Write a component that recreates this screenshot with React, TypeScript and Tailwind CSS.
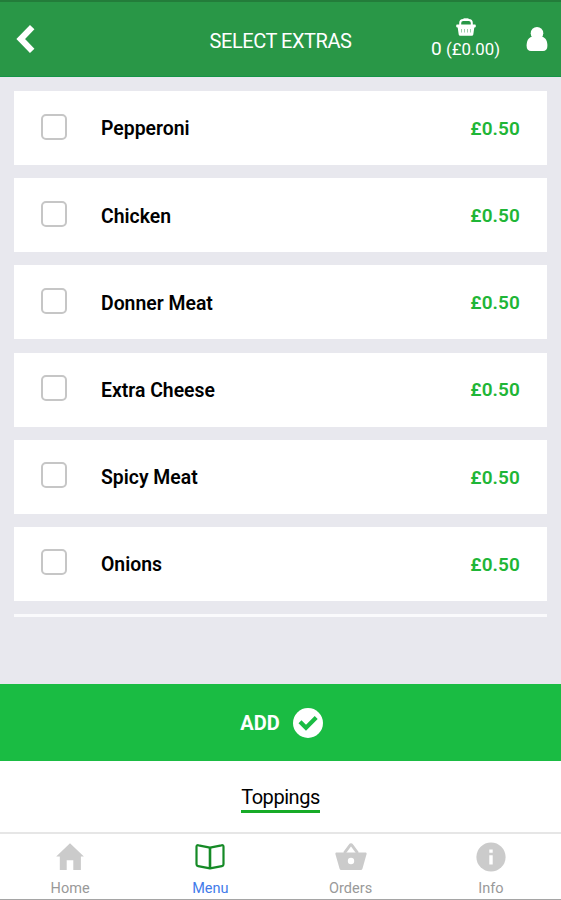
import type { ReactNode } from "react";
import clsx from "clsx";

const extras = [
  { name: "Pepperoni", price: "£0.50" },
  { name: "Chicken", price: "£0.50" },
  { name: "Donner Meat", price: "£0.50" },
  { name: "Extra Cheese", price: "£0.50" },
  { name: "Spicy Meat", price: "£0.50" },
  { name: "Onions", price: "£0.50" },
];

function ChevronIcon() {
  return (
    <svg width="20" height="30" viewBox="0 0 20 30" fill="none" stroke="#fff" strokeWidth="6.2">
      <path d="M16.2 3.2 4.7 15l11.5 11.8" />
    </svg>
  );
}

function BasketIcon() {
  return (
    <svg width="20" height="18" viewBox="0 0 20 18" fill="#fff">
      <path d="M4.2 7.5V4.9a3 3 0 0 1 3-3h5.6a3 3 0 0 1 3 3v2.600" fill="none" stroke="#fff" strokeWidth="2" />
      <path d="M7.500.3h5v2.600h-5z" />
      <path d="M1 6.600h18c.500 0 .800.300.800.800v1.200c0 .500-.300.800-.800.800h-.700l-1 7a1.600 1.600 0 0 1-1.600 1.400H4.300a1.600 1.600 0 0 1-1.600-1.400l-1-7H1c-.500 0-.800-.300-.800-.800V7.400c0-.500.300-.800.800-.800Z" />
      <path d="M5.500 11v3.500M8.500 11v3.500M11.500 11v3.500M14.500 11v3.500" stroke="#299747" strokeWidth="1" opacity=".45" />
    </svg>
  );
}

function UserIcon() {
  return (
    <svg width="22" height="26" viewBox="0 0 22 26" fill="#fff">
      <circle cx="11" cy="7.200" r="6.300" />
      <path d="M5.600 10.800C2.400 11.800.600 14.800.600 19.900.600 23.100 2.400 25 5 25h12c2.600 0 4.400-1.900 4.400-5.100 0-5.100-1.800-8.100-5-9.100Z" />
    </svg>
  );
}

function CheckIcon() {
  return (
    <svg width="30" height="30" viewBox="0 0 30 30" fill="none">
      <circle cx="15" cy="15" r="15" fill="#fff" />
      <path d="m7 13.700 6 6L23.200 9.600" stroke="#1abc43" strokeWidth="4.200" />
    </svg>
  );
}

function HomeIcon() {
  return (
    <svg width="28" height="30" viewBox="0 0 28 30" fill="#cbcbcb">
      <path d="M14 1.300 27.900 14.400h-3V28h-7.600V18.300h-6.600V28H3.800V14.400H.200Z" />
    </svg>
  );
}

function BookIcon() {
  return (
    <svg width="32" height="30" viewBox="0 0 32 30" fill="none" stroke="#158a26" strokeWidth="2.200" strokeLinejoin="round">
      <path d="M16 5.700 4.500 3.300c-1.200-.300-2 .300-2 1.500v17.500c0 1 .600 1.600 1.600 1.800L16 26.400l11.900-2.300c1-.200 1.600-.800 1.600-1.800V4.800c0-1.200-.800-1.800-2-1.500L16 5.700Z" />
      <path d="M16 5.700v20.700" strokeWidth="2.600" />
    </svg>
  );
}

function OrdersIcon() {
  return (
    <svg width="32" height="30" viewBox="0 0 32 30" fill="#cbcbcb">
      <path d="M9.300 11.200 15 3.400q1-1.500 2 0l5.700 7.800" fill="none" stroke="#cbcbcb" strokeWidth="2.800" />
      <path d="M1.600 10.500h28.800c.900 0 1.400.600 1.200 1.500l-4.100 14.400c-.400 1.100-1.100 1.600-2.200 1.600H6.700c-1.100 0-1.800-.500-2.200-1.600L.400 12c-.200-.900.300-1.500 1.200-1.500Z" />
      <circle cx="16" cy="19" r="3.200" fill="#fff" />
    </svg>
  );
}

function InfoIcon() {
  return (
    <svg width="30" height="30" viewBox="0 0 30 30" fill="#cbcbcb">
      <circle cx="15" cy="15" r="14.600" />
      <path d="M13.300 7.500h3.400v3.300h-3.400zM13.300 13.200h3.400v9.200h-3.400z" fill="#fff" />
    </svg>
  );
}

const tabs: { label: string; icon: ReactNode; active?: boolean }[] = [
  { label: "Home", icon: <HomeIcon /> },
  { label: "Menu", icon: <BookIcon />, active: true },
  { label: "Orders", icon: <OrdersIcon /> },
  { label: "Info", icon: <InfoIcon /> },
];

export default function App() {
  return (
    <div className="flex h-[900px] w-[561px] flex-col overflow-hidden bg-[#e8e8ee] font-[Roboto,sans-serif]">
      <header className="grid h-[77px] shrink-0 grid-cols-[1fr_auto_1fr] items-center border-t-2 border-b border-t-[#237c3a] border-b-[#159447] bg-[#299747] text-white">
        <button aria-label="Back" className="ml-4 justify-self-start">
          <ChevronIcon />
        </button>
        <h1 className="pt-[3px] text-[20px] leading-6 tracking-[-0.450px]">SELECT EXTRAS</h1>
        <div className="flex items-center justify-self-end pr-[13px]">
          <div className="flex flex-col items-center">
            <BasketIcon />
            <p className="pt-px text-[16.800px] leading-6 whitespace-nowrap">
              <span className="text-[19px]">0</span> (£0.00)
            </p>
          </div>
          <button aria-label="Account" className="ml-[26px]">
            <UserIcon />
          </button>
        </div>
      </header>

      <main className="flex-1 overflow-hidden px-[14px] pt-[14px]">
        <ul className="flex flex-col gap-[13.200px]">
          {extras.map((extra) => (
            <li key={extra.name} className="flex h-[74px] items-center bg-white px-[27px]">
              <span className="mb-[3px] size-[26px] rounded-[5px] border-2 border-[#c6c6c6]" />
              <span className="ml-[34px] flex-1 pt-[2px] text-[19.400px] font-semibold text-black">{extra.name}</span>
              <span className="pt-[2px] text-[19px] font-semibold tracking-[0.100px] text-[#1fb637]">{extra.price}</span>
            </li>
          ))}
          <li className="h-[3px] bg-[#fafafc]" />
        </ul>
      </main>

      <button className="flex h-[77px] shrink-0 items-center justify-center gap-[13px] bg-[#1abc43] pl-[2px] text-white">
        <span className="text-[20px] font-bold">ADD</span>
        <CheckIcon />
      </button>

      <div className="flex h-[71px] shrink-0 items-center justify-center bg-white pt-[3px]">
        <span className="border-b-[3px] border-[#17ab28] text-[20px] leading-[26px] tracking-[-0.450px] text-black">Toppings</span>
      </div>

      <nav className="grid h-[68px] shrink-0 grid-cols-4 border-t-2 border-b border-t-[#e6e6e6] border-b-[#a5a5a5] bg-white">
        {tabs.map((tab) => (
          <a key={tab.label} className="flex flex-col items-center pt-[8px]">
            {tab.icon}
            <span
              className={clsx(
                "mt-[8px] text-[14.500px] leading-[18px]",
                tab.active ? "text-[#427bea]" : "text-[#999]"
              )}
            >
              {tab.label}
            </span>
          </a>
        ))}
      </nav>
    </div>
  );
}
